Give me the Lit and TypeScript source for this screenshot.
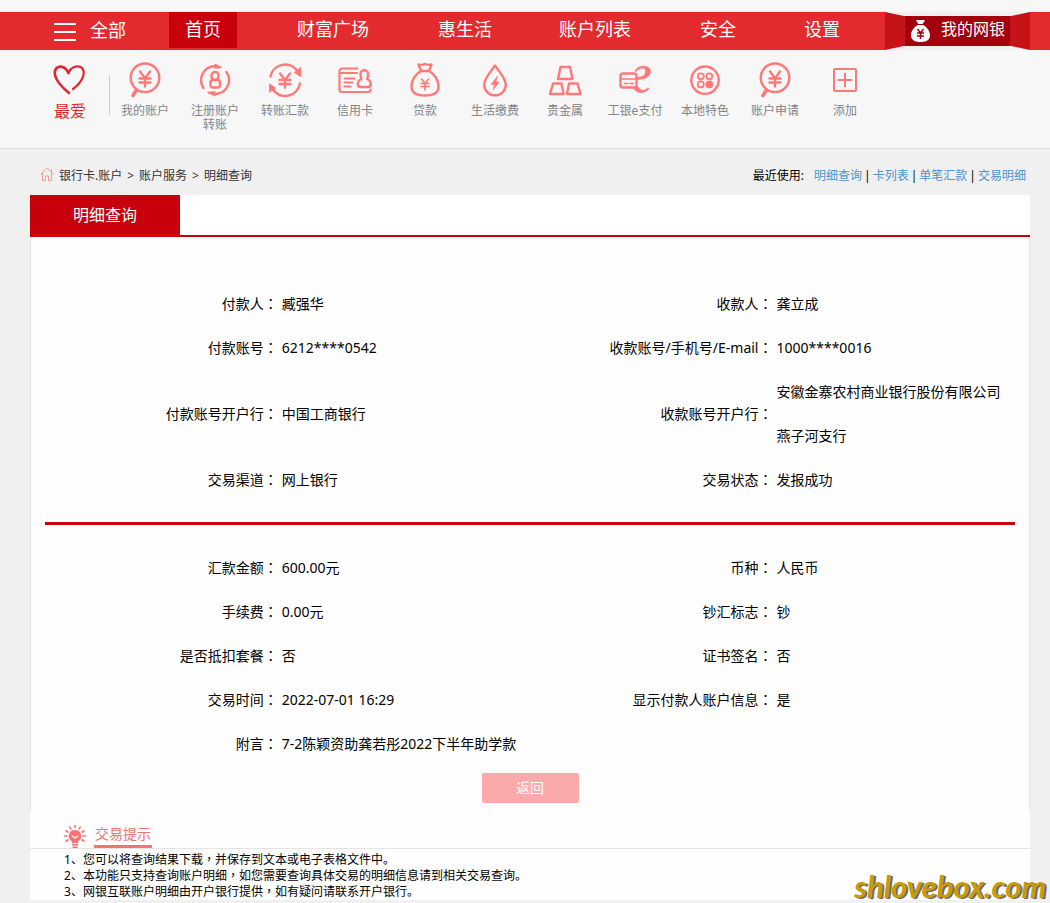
import { LitElement, html, svg, css, TemplateResult } from "lit";
import { customElement } from "lit/decorators.js";
import { classMap } from "lit/directives/class-map.js";

const yen = svg`<path d="M15 11.500l5 7 5-7M20 18.500v8M14.500 18.500h11M14.500 22.500h11" />`;

const magnifier = svg`<circle cx="20" cy="17.800" r="14.300" /><path d="M11.500 30L8 35.500" stroke-width="3.600" />${yen}`;

const icons: Record<string, TemplateResult> = {
  magnifier,
  register: svg`
    <path d="M8.500 28A14 14 0 0 1 19 6.200M31.500 12A14 14 0 0 1 21 34" />
    <path class="solid" d="M20 4.500L26 7.500 20 8zM20 35.500L13 32.500 20 32z" stroke-width="1.400" />
    <rect x="16.500" y="12" width="7" height="8" rx="3.500" />
    <rect x="15.500" y="20" width="9.500" height="7.500" rx="2.500" />`,
  transfer: svg`
    <path d="M5.500 16.500A15 15 0 0 1 32.500 11M35 23.500A15 15 0 0 1 7.500 29" />
    <path class="solid" d="M35.500 8V16.500L29.500 12.500zM4.500 32V24L10.500 28z" stroke-width="1" />
    <path d="M15 13.500l5 6.500 5-6.500M20 20v7.500M14.500 20h11M14.500 24h11" />`,
  card: svg`
    <path d="M22.500 8.500H7a2.500 2.500 0 0 0-2.500 2.500v18.500A2.500 2.500 0 0 0 7 32h26.500a2.500 2.500 0 0 0 2-2.500M5 13h17M9.500 18.500h10M9.500 22.500h8M9.500 26.500h6" stroke-width="2.200" />
    <path d="M26.500 19C25.500 17.500 25.500 16 25.500 14a3.800 3.800 0 0 1 7.600 0c0 2 0 3.500-1 5 2.500 1 3.700 2.500 3.700 5 0 2-1 3-3 3h-7c-2 0-3-1-3-3 0-2.500 1.200-4 3.700-5z" />`,
  bag: svg`
    <path d="M13.500 4.500q3 1 6.500-.5 3.500 1.500 6.500.5l-2.500 6.500h-8zM16 11C9.500 15 6.500 21 6.500 26.500c0 6.500 5 9 13.500 9s13.500-2.500 13.500-9C33.500 21 30.500 15 24 11" />
    <path d="M16.500 19l3.500 4.500 3.500-4.500M20 23.500V30M16 23.500h8M16 26.500h8" stroke-width="1.600" />`,
  drop: svg`
    <path d="M20 5.500C15 13 9.200 18 9.200 25a10.800 10.300 0 0 0 21.600 0C30.800 18 25 13 20 5.500z" />
    <path class="solid" d="M22.500 16L16 24.500h3.500L18 30l6.500-8h-3.500z" stroke-width=".5" />`,
  gold: svg`
    <path d="M15.500 7h9.500l2.500 12H13zM8 23.500h8.500l2 10.500H5zM24 23.500h8.500l3 10.500H22z" />`,
  epay: svg`
    <path class="solid" d="M20 11C22 6.500 28 5 32.500 7c4.500 2 3.500 8-1 10.500-3 1.700-6.500 2-9.500 1.500v-1.500c6 0 9-3 8.500-7C30 7 24.500 7.500 21.500 11zM19 29c3.500 5 11.500 4.500 15-.5l-1.500-.5c-3 3.500-6.500 3-9.500-1z" stroke-width=".8" />
    <rect class="paper" x="5.500" y="13.500" width="16" height="14" rx="2.500" />
    <path d="M6 19h15M9.500 23.500h3.500M15 23.500h3.500" stroke-width="1.600" />`,
  local: svg`
    <circle cx="20" cy="20.200" r="13.700" />
    <circle cx="15.800" cy="16.300" r="3" stroke-width="1.800" /><circle cx="24.300" cy="16.300" r="3" stroke-width="1.800" />
    <circle cx="15.800" cy="24.400" r="3" stroke-width="1.800" /><circle class="solid" cx="24.300" cy="24.400" r="3" stroke-width="1.800" />`,
  add: svg`<rect x="9" y="9" width="22" height="22" rx="1" stroke-width="2" /><path d="M20 13.500v13M13.500 20h13" stroke-width="2" />`,
};

interface Field {
  label: string;
  value: string;
}

const shortcuts: { icon: string; label: string }[] = [
  { icon: "magnifier", label: "我的账户" },
  { icon: "register", label: "注册账户转账" },
  { icon: "transfer", label: "转账汇款" },
  { icon: "card", label: "信用卡" },
  { icon: "bag", label: "贷款" },
  { icon: "drop", label: "生活缴费" },
  { icon: "gold", label: "贵金属" },
  { icon: "epay", label: "工银e支付" },
  { icon: "local", label: "本地特色" },
  { icon: "magnifier", label: "账户申请" },
  { icon: "add", label: "添加" },
];

@customElement("bank-header")
export class BankHeader extends LitElement {
  static styles = css`
    :host {
      display: block;
      background: #f7f7f7;
      padding-top: 12px;
      border-bottom: 1px solid #dcdcdc;
    }
    a {
      color: inherit;
      text-decoration: none;
    }
    .bar {
      display: flex;
      height: 38px;
      background: #e32a2f;
      color: #fff;
      font-size: 18px;
      line-height: 34px;
    }
    .all {
      flex: 0 0 169px;
      display: flex;
      gap: 14px;
      padding: 0 0 0 54px;
      border: 0;
      background: none;
      color: inherit;
      font: inherit;
      line-height: 36px;
      white-space: nowrap;
    }
    .lines {
      width: 22px;
      height: 18px;
      margin-top: 11px;
    }
    .menu {
      flex: 1;
      display: grid;
      grid-template-columns: 112px 141px 121px 141px 104px auto;
      justify-content: start;
      justify-items: start;
      align-items: start;
    }
    .item {
      height: 36px;
      padding: 0 16px;
      white-space: nowrap;
    }
    .item.active {
      background: #c7000b;
    }
    .ribbon {
      display: flex;
      align-items: center;
      margin-right: 20px;
      background: #f1efef;
    }
    .fold {
      width: 20px;
      height: 38px;
      background: #c61318;
      clip-path: polygon(0 0, 100% 11%, 100% 89%, 0 100%);
    }
    .fold.right {
      clip-path: polygon(0 11%, 100% 0, 100% 100%, 0 89%);
    }
    .mine {
      display: flex;
      gap: 11px;
      height: 30px;
      padding: 0 5px 0 6px;
      background: #a3000d;
      font-size: 16px;
      line-height: 26px;
      white-space: nowrap;
    }
    .mine svg {
      width: 19px;
      height: 22px;
      margin-top: 4px;
    }
    .strip {
      display: flex;
      height: 98px;
      padding-left: 30px;
    }
    .favorite {
      width: 79px;
      box-sizing: border-box;
      padding-top: 14px;
      color: #e0282e;
      font-size: 16px;
      line-height: 22px;
      text-align: center;
    }
    .favorite svg {
      display: block;
      width: 32px;
      height: 32px;
      margin: 0 auto 4px 23px;
    }
    .favorite span {
      display: block;
      width: 80px;
    }
    .rule {
      width: 1px;
      height: 40px;
      margin-top: 25px;
      background: #ccc;
    }
    .shortcuts {
      display: flex;
    }
    .shortcut {
      width: 70px;
      box-sizing: border-box;
      padding: 10px 10px 0;
      color: #858585;
      font-size: 12px;
      line-height: 14px;
      text-align: center;
    }
    .shortcut svg {
      display: block;
      width: 40px;
      height: 40px;
      margin: 0 auto 4px;
      fill: none;
      stroke: #ff7979;
      stroke-width: 2.4;
      stroke-linecap: round;
      stroke-linejoin: round;
    }
    .shortcut .solid {
      fill: #ff7979;
    }
    .shortcut .paper {
      fill: #f7f7f7;
    }
    .label {
      display: block;
      margin: 0 -4px;
    }
    .label.two {
      margin: 0;
    }
  `;

  private menu = ["首页", "财富广场", "惠生活", "账户列表", "安全", "设置"];

  render() {
    return html`
      <nav class="bar">
        <button class="all">
          <svg class="lines" viewBox="0 0 22 18" stroke="#fff" stroke-width="2">
            <path d="M0 1h22M0 9h22M0 17h22" />
          </svg>
          全部
        </button>
        <div class="menu">
          ${this.menu.map(
            (name, i) => html`<a href="#" class=${classMap({ item: true, active: i === 0 })}>${name}</a>`
          )}
        </div>
        <a href="#" class="ribbon">
          <span class="fold"></span>
          <span class="mine">
            <svg viewBox="0 0 19 22">
              <path
                fill="#fff"
                d="M5.500 0h8v2h-1L12 4H7L6.500 2h-1zM6.500 5h6C16 7.500 19 11 19 15.500 19 20 15 22 9.500 22S0 20 0 15.500C0 11 3 7.500 6.500 5z"
              />
              <path
                d="M6.500 9l3 4 3-4M9.500 13v6M6 13h7M6 16h7"
                fill="none"
                stroke="#a3000d"
                stroke-width="1.500"
              />
            </svg>
            我的网银
          </span>
          <span class="fold right"></span>
        </a>
      </nav>
      <div class="strip">
        <a href="#" class="favorite">
          <svg viewBox="0 0 32 32" fill="none" stroke="#e0282e" stroke-linecap="round" stroke-linejoin="round">
            <path d="M15.500 9C13 3 8 1.500 4.500 3.500 1 5.500 1 10.500 3.500 15c2.500 5 7 9.500 12.500 14" stroke-width="2.600" />
            <path d="M15.500 9C17 4 23 1 27.500 3c4 2 4 7 1.500 12-2 4-5 7-9 10" stroke-width="2.200" />
          </svg>
          <span>最爱</span>
        </a>
        <div class="rule"></div>
        <div class="shortcuts">
          ${shortcuts.map(
            (s) => html`<a href="#" class="shortcut">
              <svg viewBox="0 0 40 40">${icons[s.icon]}</svg>
              <span class=${classMap({ label: true, two: s.label.length > 5 })}>${s.label}</span>
            </a>`
          )}
        </div>
      </div>
    `;
  }
}

@customElement("transfer-details")
export class TransferDetails extends LitElement {
  static styles = css`
    :host {
      display: block;
      padding: 45px 14px 7px 14px;
      border: solid #e6e6e6;
      border-width: 0 1px;
    }
    table {
      width: 100%;
      table-layout: fixed;
      border-collapse: collapse;
      font-size: 14px;
      line-height: 44px;
    }
    .label-col {
      width: 24%;
    }
    .value-col {
      width: 27%;
    }
    th,
    td {
      padding: 0;
      font-weight: 400;
      text-align: left;
    }
    th {
      text-align: right;
      white-space: nowrap;
    }
    td {
      padding: 0 10px 0 4px;
    }
    .colon {
      font-family: "Noto Sans CJK TC", sans-serif;
      line-height: 1;
    }
    .divider {
      height: 3px;
      margin: 20px 0 21px;
      border: 0;
      background: #c7000b;
    }
    .back {
      display: block;
      width: 97px;
      height: 30px;
      margin: 7px auto 0;
      padding: 0;
      border: 0;
      border-radius: 2px;
      background: #fba9aa;
      color: #fff;
      font: inherit;
      font-size: 14px;
      line-height: 28px;
    }
  `;

  private parties: Field[][] = [
    [{ label: "付款人", value: "臧强华" }, { label: "收款人", value: "龚立成" }],
    [{ label: "付款账号", value: "6212****0542" }, { label: "收款账号/手机号/E-mail", value: "1000****0016" }],
    [
      { label: "付款账号开户行", value: "中国工商银行" },
      { label: "收款账号开户行", value: "安徽金寨农村商业银行股份有限公司燕子河支行" },
    ],
    [{ label: "交易渠道", value: "网上银行" }, { label: "交易状态", value: "发报成功" }],
  ];

  private payment: Field[][] = [
    [{ label: "汇款金额", value: "600.00元" }, { label: "币种", value: "人民币" }],
    [{ label: "手续费", value: "0.00元" }, { label: "钞汇标志", value: "钞" }],
    [{ label: "是否抵扣套餐", value: "否" }, { label: "证书签名", value: "否" }],
    [{ label: "交易时间", value: "2022-07-01 16:29" }, { label: "显示付款人账户信息", value: "是" }],
    [{ label: "附言", value: "7-2陈颖资助龚若彤2022下半年助学款" }],
  ];

  private renderTable(rows: Field[][]) {
    return html`<table>
      <colgroup>
        <col class="label-col" /><col class="value-col" /><col class="label-col" /><col />
      </colgroup>
      <tbody>
        ${rows.map(
          (row) => html`<tr>
            ${row.map(
              (f) => html`<th scope="row">${f.label}<span class="colon">：</span></th>
                <td colspan=${row.length === 1 ? 3 : 1}>${f.value}</td>`
            )}
          </tr>`
        )}
      </tbody>
    </table>`;
  }

  render() {
    return html`
      ${this.renderTable(this.parties)}
      <hr class="divider" />
      ${this.renderTable(this.payment)}
      <button class="back">返回</button>
    `;
  }
}

@customElement("trade-tips")
export class TradeTips extends LitElement {
  static styles = css`
    :host {
      display: block;
      padding-top: 14px;
    }
    .head {
      display: flex;
      gap: 8px;
      height: 24px;
      padding-left: 34px;
      border-bottom: 1px solid #e4e4e4;
    }
    .head svg {
      width: 22px;
      height: 23px;
      margin-top: 1px;
    }
    .title {
      margin: 0;
      height: 21px;
      border-bottom: 3px solid #ee7475;
      padding: 0 1px;
      color: #ee7475;
      font-size: 14px;
      font-weight: 400;
      line-height: 20px;
    }
    .list {
      margin: 0;
      padding: 3px 34px 0;
      list-style: none;
      font-size: 12px;
      line-height: 16px;
    }
    .comma {
      font-family: "Noto Sans CJK TC", sans-serif;
      line-height: 1;
    }
  `;

  private tips = [
    ["您可以将查询结果下载", "并保存到文本或电子表格文件中。"],
    ["本功能只支持查询账户明细", "如您需要查询具体交易的明细信息请到相关交易查询。"],
    ["网银互联账户明细由开户银行提供", "如有疑问请联系开户银行。"],
  ];

  render() {
    return html`
      <div class="head">
        <svg viewBox="0 0 22 23" fill="none" stroke="#ff7272" stroke-width="1.600">
          <path
            d="M11 0v3M5.500 1.500l1.500 3M16.500 1.500l-1.500 3M1.500 5.500l3 2M20.500 5.500l-3 2M0 11h3.500M22 11h-3.500M1.500 16.500l3-2M20.500 16.500l-3-2"
          />
          <path fill="#ff7272" stroke="none" d="M11 5a6 6 0 0 1 3.500 11l-.5 2H8l-.5-2A6 6 0 0 1 11 5zM8 19h6v1.500H8zM8.500 21.500h5V23h-5z" />
          <path stroke="#fff" stroke-width="1.400" d="M8 11l3 2 3-2" />
        </svg>
        <h2 class="title">交易提示</h2>
      </div>
      <ul class="list">
        ${this.tips.map(([a, b], i) => html`<li>${i + 1}、${a}<span class="comma">，</span>${b}</li>`)}
      </ul>
    `;
  }
}

@customElement("app-root")
export class AppRoot extends LitElement {
  static styles = css`
    :host {
      display: block;
      position: relative;
      box-sizing: border-box;
      min-height: 100vh;
      background: #f0f0f0;
      color: #000;
      font-family: "Noto Sans", "Noto Sans CJK SC", sans-serif;
      font-size: 12px;
    }
    .trail {
      display: flex;
      justify-content: space-between;
      padding: 18px 24px 10px 40px;
      line-height: 18px;
    }
    .crumbs {
      display: flex;
      gap: 5px;
      color: #333;
    }
    .crumbs svg {
      width: 14px;
      height: 14px;
    }
    .recent {
      display: flex;
      gap: 2px;
    }
    .recent a {
      color: #4a94cf;
      text-decoration: none;
    }
    .caption {
      margin-right: 8px;
    }
    .card {
      margin: 0 20px 0 30px;
      background: #fefefe;
    }
    .tabs {
      display: flex;
      height: 40px;
      border-bottom: 2px solid #c7000b;
      background: #fff;
    }
    .tab {
      width: 150px;
      height: 42px;
      padding: 0 0 2px;
      border: 0;
      background: #c7000b;
      color: #fff;
      font: inherit;
      font-size: 16px;
      line-height: 38px;
    }
    .watermark {
      position: absolute;
      right: 4px;
      bottom: 0;
      color: #c99a07;
      font: italic 700 31px/34px Lato, sans-serif;
      text-shadow: 2px 1px 0 #6a6a6a;
    }
  `;

  private crumbs = ["银行卡.账户", "账户服务", "明细查询"];
  private recent = ["明细查询", "卡列表", "单笔汇款", "交易明细"];

  render() {
    return html`
      <bank-header></bank-header>
      <div class="trail">
        <div class="crumbs">
          <svg viewBox="0 0 14 14" fill="none" stroke="#f79a9a">
            <path d="M.5 7.500L7 .8l6.500 6.700M2.500 6v7.500h3V9h3v4.500h3V6M11.500 5V2" />
          </svg>
          ${this.crumbs.map((name, i) => html`${i ? html`<span>&gt;</span>` : ""}<span>${name}</span>`)}
        </div>
        <div class="recent">
          <span class="caption">最近使用:</span>
          ${this.recent.map((name, i) => html`${i ? html`<span>|</span>` : ""}<a href="#">${name}</a>`)}
        </div>
      </div>
      <main class="card">
        <div class="tabs"><button class="tab">明细查询</button></div>
        <transfer-details></transfer-details>
        <trade-tips></trade-tips>
      </main>
      <div class="watermark">shlovebox.com</div>
    `;
  }
}
